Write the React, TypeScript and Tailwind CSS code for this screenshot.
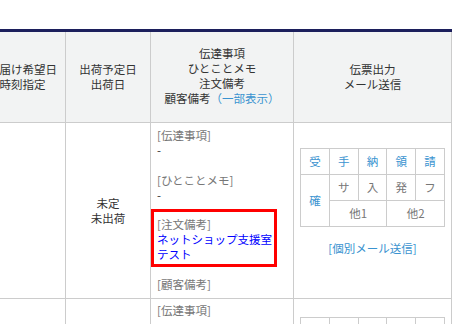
const font = { fontFamily: '"Noto Sans CJK JP", "Noto Sans", sans-serif' };

type Mark = { label: string; blue?: boolean; span?: 'row' | 'col' };

const marks: Mark[] = [
  { label: '受', blue: true },
  { label: '手', blue: true },
  { label: '納', blue: true },
  { label: '領', blue: true },
  { label: '請', blue: true },
  { label: '確', blue: true, span: 'row' },
  { label: 'サ' },
  { label: '入' },
  { label: '発' },
  { label: 'フ' },
  { label: '他1', span: 'col' },
  { label: '他2', span: 'col' },
];

const MarkGrid = () => (
  <div className="mx-[6px] grid grid-cols-5 border-l border-t border-[#cccccc]">
    {marks.map((m) => (
      <div
        key={m.label}
        className={[
          'flex items-center justify-center border-b border-r border-[#cccccc]',
          m.span === 'row' ? 'row-span-2 h-[52px]' : 'h-[26px]',
          m.span === 'col' ? 'col-span-2' : '',
          m.blue ? 'text-[#3a93d0]' : 'text-[#777777]',
        ].join(' ')}
      >
        {m.label}
      </div>
    ))}
  </div>
);

const Label = ({ children }: { children: string }) => <div className="text-[#777777]">{children}</div>;

const NotesCell = ({ highlight, top }: { highlight: boolean; top: string }) => (
  <div className={`w-[143px] shrink-0 border-r border-[#cccccc] px-[6px] pb-[6px] ${top}`}>
    <Label>[伝達事項]</Label>
    <div>-</div>
    <div className="mt-[15px]">
      <Label>[ひとことメモ]</Label>
      <div>-</div>
    </div>
    <div
      className={
        highlight
          ? '-ml-[6px] mt-[6px] w-[126px] whitespace-nowrap border-[3px] border-[#ff0000] px-[3px] pb-[2px] pt-[5px]'
          : 'mt-[15px] whitespace-nowrap'
      }
    >
      <Label>[注文備考]</Label>
      <div className="text-[#0000ff]">ネットショップ支援室</div>
      <div className="text-[#0000ff]">テスト</div>
    </div>
    <div className="mt-[10px]">
      <Label>[顧客備考]</Label>
    </div>
  </div>
);

const BodyRow = ({ highlight, notesTop, gridTop }: { highlight: boolean; notesTop: string; gridTop: string }) => (
  <div className="flex border-b border-[#cccccc]">
    <div className="w-[86px] shrink-0 border-r border-[#cccccc]" />
    <div className="flex w-[85px] shrink-0 flex-col items-center justify-center border-r border-[#cccccc]">
      <div>未定</div>
      <div>未出荷</div>
    </div>
    <NotesCell highlight={highlight} top={notesTop} />
    <div className={`w-[158px] shrink-0 border-r border-[#cccccc] ${gridTop}`}>
      <MarkGrid />
      <div className="mt-[14px] text-center text-[#3a93d0]">[個別メール送信]</div>
    </div>
  </div>
);

export default function App() {
  return (
    <div className="h-[324px] overflow-hidden bg-white pt-[29px] text-[11.5px] leading-[15px] text-[#333333]" style={font}>
      <div className="-ml-[20px] w-[472px]">
        <div className="flex h-[94px] border-b border-t-[3px] border-b-[#cccccc] border-t-[#1c1f5c] bg-[#f2f3f3] text-center">
          <div className="flex w-[86px] shrink-0 flex-col items-center justify-center border-r border-[#cccccc]">
            <div className="whitespace-nowrap">お届け希望日</div>
            <div>時刻指定</div>
          </div>
          <div className="flex w-[85px] shrink-0 flex-col items-center justify-center border-r border-[#cccccc]">
            <div>出荷予定日</div>
            <div>出荷日</div>
          </div>
          <div className="flex w-[143px] shrink-0 flex-col items-center justify-center border-r border-[#cccccc] pb-[3px]">
            <div>伝達事項</div>
            <div>ひとことメモ</div>
            <div>注文備考</div>
            <div>
              顧客備考<span className="text-[#3a93d0]">（一部表示）</span>
            </div>
          </div>
          <div className="flex w-[158px] shrink-0 flex-col items-center justify-center border-r border-[#cccccc]">
            <div>伝票出力</div>
            <div>メール送信</div>
          </div>
        </div>
        <BodyRow highlight notesTop="pt-[5px]" gridTop="pt-[25px]" />
        <BodyRow highlight={false} notesTop="pt-[4px]" gridTop="pt-[18px]" />
      </div>
    </div>
  );
}
